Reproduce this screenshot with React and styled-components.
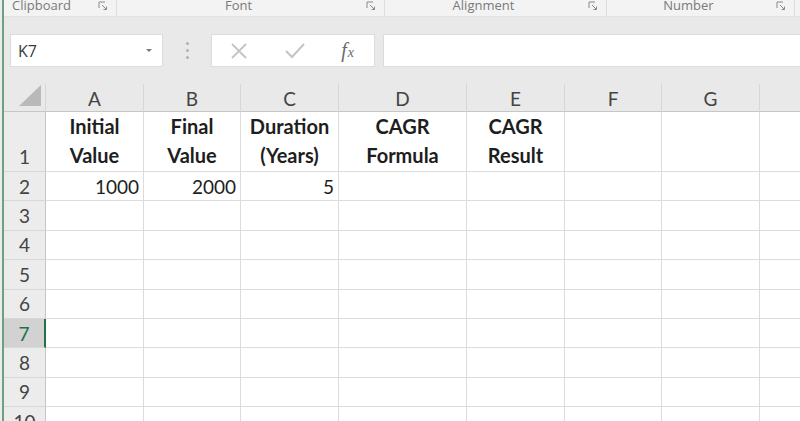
import React from 'react'
import styled, { createGlobalStyle } from 'styled-components'

const GlobalStyle = createGlobalStyle`
  html, body {
    margin: 0;
    padding: 0;
    background: #e9e9e9;
  }
  body {
    width: 800px;
    height: 421px;
    overflow: hidden;
  }
`

const columns = [
  { key: 'A', width: 98 },
  { key: 'B', width: 97 },
  { key: 'C', width: 98 },
  { key: 'D', width: 128 },
  { key: 'E', width: 98 },
  { key: 'F', width: 97 },
  { key: 'G', width: 98 },
  { key: 'H', width: 60 }
]

const rows = [
  { n: 1, tall: true, cells: { A: ['Initial', 'Value'], B: ['Final', 'Value'], C: ['Duration', '(Years)'], D: ['CAGR', 'Formula'], E: ['CAGR', 'Result'] } },
  { n: 2, cells: { A: 1000, B: 2000, C: 5 } },
  { n: 3, cells: {} },
  { n: 4, cells: {} },
  { n: 5, cells: {} },
  { n: 6, cells: {} },
  { n: 7, cells: {}, active: true },
  { n: 8, cells: {} },
  { n: 9, cells: {} },
  { n: 10, cells: {} }
]

const groups = [
  { label: 'Clipboard', width: 113, align: 'left' },
  { label: 'Font', width: 268 },
  { label: 'Alignment', width: 222 },
  { label: 'Number', width: 188 }
]

export default function App() {
  return (
    <>
      <GlobalStyle />
      <Frame>
        <Window>
          <RibbonLabels>
            {groups.map(g => (
              <Group key={g.label} style={{ width: g.width }} $align={g.align}>
                <GroupLabel>{g.label}</GroupLabel>
                <Launcher viewBox="0 0 10 10">
                  <path d="M1 1 H7 M1 1 V7" stroke="#8a8a8a" strokeWidth="1" fill="none" />
                  <path d="M4 4 L8.5 8.5 M8.5 5.5 V8.5 H5.5" stroke="#8a8a8a" strokeWidth="1" fill="none" />
                </Launcher>
              </Group>
            ))}
          </RibbonLabels>

          <FormulaBand>
            <NameBox>
              <span>K7</span>
              <Caret />
            </NameBox>
            <Grip>
              <i /><i /><i />
            </Grip>
            <ButtonBox>
              <svg width="18" height="18" viewBox="0 0 18 18">
                <path d="M2 2 L16 16 M16 2 L2 16" stroke="#c4c4c4" strokeWidth="1.8" />
              </svg>
              <svg width="22" height="18" viewBox="0 0 22 18">
                <path d="M2 9 L8 15 L20 2" stroke="#c4c4c4" strokeWidth="2" fill="none" />
              </svg>
              <Fx>f<sub>x</sub></Fx>
            </ButtonBox>
            <FormulaInput />
          </FormulaBand>

          <Sheet>
            <Corner>
              <svg width="22" height="22" viewBox="0 0 22 22">
                <polygon points="0,21 22,21 22,0" fill="#b9b9b9" />
              </svg>
            </Corner>
            {columns.map(c => (
              <ColHead key={c.key}>{c.key === 'H' ? '' : c.key}</ColHead>
            ))}
            {rows.map(r => (
              <React.Fragment key={r.n}>
                <RowHead $tall={r.tall} $active={r.active}>{r.n}</RowHead>
                {columns.map(c => {
                  const v = r.cells[c.key]
                  if (Array.isArray(v)) {
                    return (
                      <HeaderCell key={c.key}>
                        <span>{v[0]}</span>
                        <span>{v[1]}</span>
                      </HeaderCell>
                    )
                  }
                  return <Cell key={c.key} $tall={r.tall}>{v}</Cell>
                })}
              </React.Fragment>
            ))}
          </Sheet>
        </Window>
      </Frame>
    </>
  )
}

const Frame = styled.div`
  width: 800px;
  height: 421px;
  padding-left: 2px;
  box-sizing: border-box;
  background: #ececec;
  overflow: hidden;
`
const Window = styled.div`
  height: 100%;
  border-left: 2px solid #6e9f84;
  display: flex;
  flex-direction: column;
`
const RibbonLabels = styled.div`
  flex: none;
  height: 16px;
  display: flex;
  background: #f3f3f3;
  overflow: hidden;
`
const Group = styled.div`
  position: relative;
  flex: none;
  display: flex;
  align-items: flex-end;
  justify-content: ${p => (p.$align === 'left' ? 'flex-start' : 'center')};
  padding-left: ${p => (p.$align === 'left' ? '8px' : '0')};
  padding-right: ${p => (p.$align === 'left' ? '0' : '24px')};
  box-sizing: border-box;
  border-right: 1px solid #dedede;
`
const GroupLabel = styled.span`
  font-family: 'Open Sans', 'Noto Sans', sans-serif;
  font-size: 13px;
  line-height: 22px;
  color: #7a7a7a;
  white-space: nowrap;
`
const Launcher = styled.svg`
  position: absolute;
  right: 8px;
  top: 1px;
  width: 10px;
  height: 10px;
`
const FormulaBand = styled.div`
  flex: none;
  height: 68px;
  box-sizing: border-box;
  padding: 17px 0 17px 6px;
  display: flex;
  align-items: stretch;
  background: #e9e9e9;
  border-top: 1px solid #e2e2e2;
`
const NameBox = styled.div`
  width: 153px;
  box-sizing: border-box;
  background: #fff;
  border: 1px solid #dcdcdc;
  display: flex;
  align-items: center;
  justify-content: space-between;
  padding: 0 10px 0 7px;
  font-family: 'Open Sans', 'Noto Sans', sans-serif;
  font-size: 16px;
  color: #3a3a3a;
`
const Caret = styled.span`
  width: 0;
  height: 0;
  border-left: 3px solid transparent;
  border-right: 3px solid transparent;
  border-top: 3px solid #777;
`
const Grip = styled.div`
  width: 48px;
  display: flex;
  flex-direction: column;
  align-items: center;
  justify-content: center;
  gap: 4px;
  i {
    width: 3px;
    height: 3px;
    border-radius: 50%;
    background: #b0b0b0;
  }
`
const ButtonBox = styled.div`
  width: 164px;
  box-sizing: border-box;
  background: #fff;
  border: 1px solid #dcdcdc;
  display: flex;
  align-items: center;
  justify-content: space-between;
  padding: 0 20px 0 18px;
`
const Fx = styled.span`
  font-family: 'Liberation Serif', 'DejaVu Serif', serif;
  font-style: italic;
  font-size: 20px;
  color: #6a6a6a;
  sub {
    font-size: 14px;
    vertical-align: 0;
    margin-left: 1px;
  }
`
const FormulaInput = styled.div`
  flex: 1;
  margin-left: 8px;
  background: #fff;
  border: 1px solid #dcdcdc;
  border-right: none;
`
const Sheet = styled.div`
  flex: none;
  display: grid;
  grid-template-columns: 42px ${columns.map(c => c.width + 'px').join(' ')};
  grid-template-rows: 28px 60px repeat(9, 29.4px);
  background: #fff;
  font-family: Lato, 'Open Sans', sans-serif;
  color: #1e1e1e;
`
const Corner = styled.div`
  background: #e9e9e9;
  display: flex;
  align-items: flex-end;
  justify-content: flex-end;
  padding: 0 4px 4px 0;
  border-bottom: 1px solid #c6c6c6;
  border-right: 1px solid #d6d6d6;
`
const ColHead = styled.div`
  background: #e9e9e9;
  border-bottom: 1px solid #c6c6c6;
  border-right: 1px solid #d6d6d6;
  display: flex;
  align-items: center;
  justify-content: center;
  font-size: 19px;
  color: #444;
  padding-top: 1px;
`
const RowHead = styled.div`
  background: ${p => (p.$active ? '#d2d2d2' : '#ececec')};
  color: ${p => (p.$active ? '#217346' : '#444')};
  border-bottom: 1px solid #d8d8d8;
  border-right: ${p => (p.$active ? '2px solid #217346' : '1px solid #c6c6c6')};
  display: flex;
  align-items: ${p => (p.$tall ? 'flex-end' : 'center')};
  justify-content: center;
  padding-bottom: ${p => (p.$tall ? '3px' : '0')};
  font-size: 19px;
`
const Cell = styled.div`
  border-bottom: 1px solid #dcdcdc;
  border-right: 1px solid #dcdcdc;
  display: flex;
  align-items: center;
  justify-content: flex-end;
  padding-right: 4px;
  font-size: 19px;
`
const HeaderCell = styled.div`
  border-bottom: 1px solid #dcdcdc;
  border-right: 1px solid #dcdcdc;
  display: flex;
  flex-direction: column;
  align-items: center;
  justify-content: flex-end;
  font-size: 20px;
  font-weight: 700;
  line-height: 29px;
  padding-bottom: 1px;
`
